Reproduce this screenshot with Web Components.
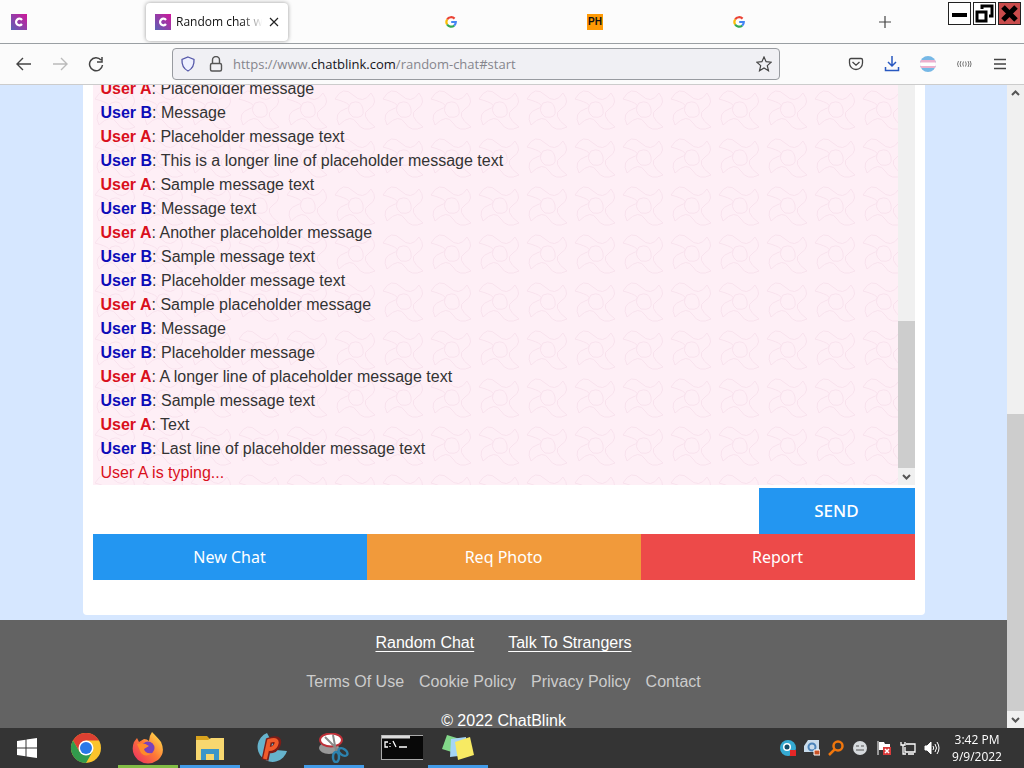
<!DOCTYPE html>
<html lang="en">
<head>
<meta charset="utf-8">
<title>Random chat</title>
<style>
html,body{height:100%;margin:0}
body{overflow:hidden;font-family:"Liberation Sans",Arial,sans-serif}
</style>
</head>
<body>
<desktop-screen></desktop-screen>
<script>
const define = (name, html) => customElements.define(name, class extends HTMLElement {
  constructor() {
    super();
    const t = document.createElement('template');
    t.innerHTML = '<style>*{box-sizing:border-box}button{font:inherit;color:inherit;border:0;padding:0;background:none}svg{display:block}</style>' + html;
    this.attachShadow({mode: 'open'}).append(t.content.cloneNode(true));
  }
});

define('site-icon', `
<style>:host{display:block;width:16px;height:16px}</style>
<svg width="16" height="16" viewBox="0 0 16 16"><defs><linearGradient id="g" x1="0" y1="1" x2="1" y2="0"><stop stop-color="#5a63b5"/><stop offset="1" stop-color="#d0169a"/></linearGradient></defs><rect width="16" height="16" fill="url(#g)"/><path d="M11 6A3.3 3.3 0 1 0 11 10" fill="none" stroke="#fff" stroke-width="2.2"/></svg>`);

define('google-icon', `
<style>:host{display:block;width:16px;height:16px}</style>
<svg width="16" height="16" viewBox="0 0 16 16" fill="none" stroke-width="2.2"><path d="M4.1 5.5A4.8 4.8 0 0 1 11.6 4.6" stroke="#ea4335"/><path d="M4.1 10.5A4.8 4.8 0 0 1 4.1 5.5" stroke="#fbbc05"/><path d="M11.2 11.6A4.8 4.8 0 0 1 4.1 10.5" stroke="#34a853"/><path d="M8.2 8H12.8A4.8 4.8 0 0 1 11.2 11.6" stroke="#4285f4"/></svg>`);

define('browser-tab', `
<style>
:host{display:flex;align-items:center;gap:5px;width:144px;height:38px;padding:0 9px;font:12px/16px "Open Sans","Noto Sans",sans-serif;color:#111}
:host([active]){width:142px;margin-right:2px;border-radius:4px;background:#fff;box-shadow:0 0 4px #999}
</style><slot></slot>`);

define('tab-strip', `
<style>
:host{display:flex;height:44px;background:#fcfcfc;border-bottom:1px solid #9a9fa3;padding:3px 3px 0 2px;align-items:flex-start}
.label{width:90px;overflow:hidden;white-space:nowrap;-webkit-mask-image:linear-gradient(90deg,#000 75%,transparent 98%);mask-image:linear-gradient(90deg,#000 75%,transparent 98%)}
.ph{width:16px;height:16px;background:#ff9a05;color:#111;font:bold 10px/16px "Liberation Sans";text-align:center}
.new{margin-left:12px;width:16px;height:38px}
.wins{display:flex;gap:2px;margin-left:auto}
.wins button{width:23px;height:23px;border:1px solid #222;background:#fff;margin-top:-1px}
.wins .x{background:#c94c4c}
</style>
<browser-tab><site-icon></site-icon></browser-tab>
<browser-tab active><site-icon></site-icon><span class="label">Random chat with</span><button aria-label="Close tab"><svg width="10" height="10" viewBox="0 0 10 10" stroke="#222" stroke-width="1.2"><path d="M1 1L9 9M9 1L1 9"/></svg></button></browser-tab>
<browser-tab></browser-tab>
<browser-tab><google-icon></google-icon></browser-tab>
<browser-tab><span class="ph">PH</span></browser-tab>
<browser-tab><google-icon></google-icon></browser-tab>
<button class="new" aria-label="New tab"><svg width="14" height="14" viewBox="0 0 14 14" stroke="#444" stroke-width="1.2"><path d="M7 1V13M1 7H13"/></svg></button>
<div class="wins">
<button aria-label="Minimize"><svg width="21" height="21" viewBox="0 0 21 21"><path d="M3 12H18" stroke="#000" stroke-width="4"/></svg></button>
<button aria-label="Restore"><svg width="21" height="21" viewBox="0 0 21 21" fill="none" stroke="#000" stroke-width="3"><path d="M3 9H12V18H3ZM8 6V3H18V13H15"/></svg></button>
<button class="x" aria-label="Close"><svg width="21" height="21" viewBox="0 0 21 21" stroke="#000" stroke-width="5"><path d="M4 4L17 17M17 4L4 17"/></svg></button>
</div>`);

define('nav-bar', `
<style>
:host{display:flex;align-items:center;height:41px;background:#fbfbfb;border-bottom:1px solid #ccc;padding:0 16px}
.nav{display:flex;gap:20px;width:156px}
.url{flex:1;min-width:0;display:flex;align-items:center;height:32px;border:1px solid #989ba0;border-radius:4px;background:#f0f0f4;padding:0 7px;font:13px/20px "Open Sans","Noto Sans",sans-serif;color:#85858c}
.url span{margin-left:9px;flex:1}.url b{font-weight:400;color:#15141a}
.url svg+svg{margin-left:12px}
.tools{display:flex;justify-content:space-between;width:160px;margin-left:68px}
</style>
<div class="nav">
<button aria-label="Back"><svg width="16" height="16" viewBox="0 0 16 16" fill="none" stroke="#444" stroke-width="1.4"><path d="M15 8H1M7 2L1 8L7 14"/></svg></button>
<button aria-label="Forward"><svg width="16" height="16" viewBox="0 0 16 16" fill="none" stroke="#bbb" stroke-width="1.4"><path d="M1 8H15M9 2L15 8L9 14"/></svg></button>
<button aria-label="Reload"><svg width="16" height="16" viewBox="0 0 16 16" fill="none" stroke="#444" stroke-width="1.5"><path d="M13 4A6.5 6.5 0 1 0 14.5 9M14 1V6H9"/></svg></button>
</div>
<div class="url">
<svg width="16" height="16" viewBox="0 0 16 16" fill="#eef0ff" stroke="#5558a8" stroke-width="1.3"><path d="M8 1L14 3.4C14.4 9 12 13 8 15C4 13 1.600 9 2 3.400Z"/></svg>
<svg width="16" height="16" viewBox="0 0 16 16" fill="none" stroke="#555" stroke-width="1.4"><rect x="2.500" y="7.500" width="11" height="7.500" rx="1.500"/><path d="M4.500 7V4A3.500 3.500 0 0 1 11.500 4V7"/></svg>
<span>https://www.<b>chatblink.com</b>/random-chat#start</span>
<svg width="16" height="16" viewBox="0 0 16 16" fill="none" stroke="#444" stroke-width="1.2"><path d="M8 1L10.100 5.700L15.200 6.200L11.300 9.600L12.500 14.700L8 12L3.500 14.700L4.700 9.600L.8 6.200L5.900 5.700Z"/></svg>
</div>
<div class="tools">
<button aria-label="Pocket"><svg width="16" height="16" viewBox="0 0 16 16" fill="none" stroke="#444" stroke-width="1.3"><path d="M3 2.500H13Q14.500 2.500 14.500 4V7A6.500 6.500 0 0 1 1.500 7V4Q1.500 2.500 3 2.500ZM4.500 6L8 9.200L11.500 6"/></svg></button>
<button aria-label="Downloads"><svg width="16" height="16" viewBox="0 0 16 16" fill="none" stroke="#2858c0" stroke-width="1.5"><path d="M8 0V10M4 6L8 10L12 6M1.500 11V14.500H14.500V11"/></svg></button>
<button aria-label="Account"><svg width="16" height="16" viewBox="0 0 16 16"><clipPath id="c"><circle cx="8" cy="8" r="8"/></clipPath><g clip-path="url(#c)"><path fill="#76b8e6" d="M0 0H16V16H0Z"/><path fill="#edb0ce" d="M0 4H16V12H0Z"/><path fill="#fff" d="M0 6.500H16V10H0Z"/></g></svg></button>
<button aria-label="Extension"><svg width="16" height="16" viewBox="0 0 16 16" fill="none" stroke="#777"><path d="M2.500 5Q.5 8 2.500 11M5 5Q3 8 5 11M7.500 5.500Q6 8 7.500 10.500M9.500 5.500Q11 8 9.500 10.500M12 5Q14 8 12 11M14.200 5Q16 8 14.200 11"/></svg></button>
<button aria-label="Menu"><svg width="16" height="16" viewBox="0 0 16 16" stroke="#444" stroke-width="1.300"><path d="M2 3.500H14M2 8H14M2 12.500H14"/></svg></button>
</div>`);

define('scroll-bar', `
<style>
:host{display:flex;flex-direction:column;width:17px;background:#f0f0f0}
.arrow{height:17px;padding:5px 4px}
.track{flex:1;min-height:0;display:flex;flex-direction:column;justify-content:flex-end}
.thumb{height:var(--size);margin-bottom:var(--end,0px);background:#cdcdcd}
</style>
<div class="arrow"><svg width="9" height="7" viewBox="0 0 9 7" fill="none" stroke="#555" stroke-width="2"><path d="M1 5L4.500 1.500L8 5"/></svg></div>
<div class="track"><div class="thumb"></div></div>
<div class="arrow"><svg width="9" height="7" viewBox="0 0 9 7" fill="none" stroke="#555" stroke-width="2"><path d="M1 2L4.500 5.500L8 2"/></svg></div>`);

define('chat-line', `
<style>:host{display:block;color:#333;font-size:16px;line-height:24px}b{color:#d9101c}:host([me]) b{color:#0c0cb8}</style>
<b><slot name="who"></slot></b>: <slot></slot>`);

define('chat-log', `
<style>
:host{display:flex;height:400px;overflow:hidden;position:relative;align-items:flex-end;background:#feeff6}
.bg{position:absolute;inset:0;width:100%;height:100%}
.lines{position:relative;flex:1;padding:0 8px}
.typing{color:#d9101c;font-size:16px;line-height:24px}
scroll-bar{position:relative;height:640px;--size:147px}
</style>
<svg class="bg" aria-hidden="true"><defs><pattern id="p" width="48" height="48" patternUnits="userSpaceOnUse"><path d="M2 14Q10 0 20 10T38 8Q46 18 36 24T42 42Q30 48 24 38T6 40Q0 28 12 24T2 14M18 18Q28 14 30 24T20 32Q12 26 18 18" fill="none" stroke="#f8e2ed"/></pattern></defs><rect width="100%" height="100%" fill="url(#p)"/></svg>
<div class="lines"><slot></slot><div class="typing">User A is typing...</div></div>
<scroll-bar></scroll-bar>`);

define('chat-panel', `
<style>
:host{display:block;width:842px;max-width:100%;padding:0 10px 35px;background:#fff;border-radius:0 0 4px 4px}
.send{display:flex;height:46px;margin-top:3px}
textarea{flex:1;min-width:0;border:0;padding:4px 8px;resize:none;outline:0;background:#fff;font:16px/20px "Liberation Sans",Arial,sans-serif}
.send button{width:156px;background:#2396f1;color:#fff;font:500 17px/24px "Noto Sans",sans-serif}
.actions{display:grid;grid-template-columns:repeat(3,1fr);height:46px;color:#fff;font:16px/24px "Noto Sans",sans-serif;text-shadow:0 1px 1px #0005}
.n{background:#2396f1}.q{background:#f19a3b}.r{background:#ed4a49}
</style>
<chat-log><slot></slot></chat-log>
<div class="send"><textarea aria-label="Message" autofocus></textarea><button>SEND</button></div>
<div class="actions"><button class="n">New Chat</button><button class="q">Req Photo</button><button class="r">Report</button></div>`);

define('site-footer', `
<style>
:host{display:block;background:#636363;text-align:center;font-size:16px;line-height:24px;color:#fff;padding-top:11px}
nav{display:flex;justify-content:center;gap:15px;margin-bottom:15px}
nav.main{gap:34px}a{color:#ccc;text-decoration:none}.main a{color:#fff;text-decoration:underline;text-underline-offset:3px}
</style>
<nav class="main"><a href="#random">Random Chat</a><a href="#talk">Talk To Strangers</a></nav>
<nav><a href="#terms">Terms Of Use</a><a href="#cookies">Cookie Policy</a><a href="#privacy">Privacy Policy</a><a href="#contact">Contact</a></nav>
<div>© 2022 ChatBlink</div>`);

define('task-item', `
<style>:host{display:flex;align-items:center;justify-content:center;width:60px;height:40px;border-bottom:3px solid var(--line,transparent);padding-top:2px}</style><slot></slot>`);

define('task-bar', `
<style>
:host{display:flex;align-items:center;height:40px;background:#343434;color:#fff}
.apps{display:flex;gap:2px}.apps :first-child{width:54px}
.tray{display:flex;gap:8px;margin-left:auto}
.clock{width:66px;margin:0 14px 0 4px;text-align:center;font:12px/17px "Open Sans","Noto Sans",sans-serif}
</style>
<div class="apps">
<task-item><svg width="20" height="20" viewBox="0 0 20 20" fill="#fff"><path d="M0 3L8.500 1.700V9.500H0ZM9.500 1.500L20 0V9.500H9.500ZM0 10.500H8.500V18.300L0 17ZM9.500 10.500H20V20L9.500 18.500Z"/></svg></task-item>
<task-item><svg width="30" height="30" viewBox="0 0 30 30"><circle cx="15" cy="15" r="15" fill="#fbc42c"/><path d="M2 7.500A15 15 0 0 1 28 7.500H15L8.500 18.800Z" fill="#dd4032"/><path d="M2 7.500A15 15 0 0 0 15 30L21.500 18.800H8.500Z" fill="#329b4d"/><circle cx="15" cy="15" r="7.500" fill="#fff"/><circle cx="15" cy="15" r="6" fill="#2878e8"/></svg></task-item>
<task-item style="--line:#82bd45"><svg width="32" height="32" viewBox="0 0 32 32"><defs><linearGradient id="f" x1="1" y1="0" x2="0" y2="1"><stop stop-color="#fff04d"/><stop offset=".5" stop-color="#ff7836"/><stop offset="1" stop-color="#e82468"/></linearGradient></defs><path d="M20 0Q27 7 29 10Q34 21 26 28Q16 35 6 28Q-2 20 2 10L5 6L7 10L12 7Q15 7 17 9Q17 4 20 0Z" fill="url(#f)"/><circle cx="16" cy="16" r="6.500" fill="#7941bd"/><path d="M5 12Q12 10 17 14L12 17Q13 22 20 21Q14 26 9 21Z" fill="#ff8a2b"/></svg></task-item>
<task-item style="--line:#429be8"><svg width="28" height="24" viewBox="0 0 28 24"><path d="M0 0H11L14 3H28V24H0Z" fill="#d9a31d"/><path d="M0 4H12L15 2H28V24H0Z" fill="#f7d76f"/><path d="M5 24V13H23V24H18V18H10V24Z" fill="#3b96c8"/></svg></task-item>
<task-item><svg width="30" height="30" viewBox="0 0 30 30"><path d="M10 0A15 15 0 1 0 30 18L19 17Z" fill="#66b3cc"/><path d="M8 27L12 8Q23 4 20 12Q18 17 12 17" fill="none" stroke="#7d1d18" stroke-width="7"/><path d="M8 26L12 8Q22 5 19 12Q17 16 12 16" fill="none" stroke="#f15b2b" stroke-width="4"/></svg></task-item>
<task-item style="--line:#429be8"><svg width="30" height="30" viewBox="0 0 30 30"><ellipse cx="10" cy="15" rx="10" ry="6" fill="#999"/><ellipse cx="12" cy="7" rx="11" ry="6.500" fill="#fff" stroke="#bd3038" stroke-width="2"/><path d="M6 4L20 18M14 2L17 18" stroke="#888" stroke-width="2"/><g fill="none" stroke="#2c82ae" stroke-width="2.500"><ellipse cx="17" cy="24" rx="3" ry="5"/><ellipse cx="24" cy="19" rx="5" ry="3" transform="rotate(35 24 19)"/></g></svg></task-item>
<task-item><svg width="30" height="25" viewBox="0 0 30 25"><rect x=".5" y=".5" width="29" height="24" fill="#080808" stroke="#aaa"/><path d="M1 2H29" stroke="#ddd" stroke-width="3"/><path d="M7 7H4V12H7M9 8V9M9 11V12M12 6L15 12M18 12H26" fill="none" stroke="#fff" stroke-width="1.300"/></svg></task-item>
<task-item style="--line:#429be8"><svg width="32" height="26" viewBox="0 0 32 26"><path d="M5 0L18 4L13 18L0 14Z" fill="#82d889"/><path d="M9 4L24 2L25 20L8 22Z" fill="#a5d5f5"/><path d="M13 7L28 2L32 20L16 25Z" fill="#f7ea63"/></svg></task-item>
</div>
<div class="tray">
<svg width="16" height="16" viewBox="0 0 16 16"><circle cx="8" cy="8" r="8" fill="#35aad2"/><circle cx="7" cy="7" r="4" fill="#fff"/><circle cx="7" cy="7" r="2.500" fill="#134b66"/><path d="M10 10H16V16H10Z" fill="#e52727"/></svg>
<svg width="16" height="16" viewBox="0 0 16 16"><path d="M4 0H15V12H0V6Z" fill="#c9dcec"/><circle cx="8" cy="7" r="3.500" fill="none" stroke="#4b84ba" stroke-width="2"/><path d="M10 10H16V15H10Z" fill="#c95226" stroke="#fff"/></svg>
<svg width="16" height="16" viewBox="0 0 16 16" fill="none" stroke="#ef760d" stroke-width="2.500"><circle cx="10" cy="6" r="4.500"/><path d="M7 9L1 15"/></svg>
<svg width="16" height="16" viewBox="0 0 16 16"><circle cx="8" cy="8" r="7" fill="#d6dadd"/><path d="M4 6H7M9 6H12M4 10H12" stroke="#555"/></svg>
<svg width="16" height="16" viewBox="0 0 16 16"><path d="M2 1V15" stroke="#fff"/><path d="M3 2H8L9 4H14V10H3Z" fill="#fff"/><path d="M7 7H15V15H7Z" fill="#d83a3a"/><path d="M9 9L13 13M13 9L9 13" stroke="#fff" stroke-width="1.500"/></svg>
<svg width="16" height="16" viewBox="0 0 16 16" fill="none" stroke="#fff" stroke-width="1.300"><path d="M6 4H15V12H5V7M8 14H14M1 2V5H5V2M3 5V14H6"/></svg>
<svg width="16" height="16" viewBox="0 0 16 16" fill="none" stroke="#fff"><path d="M1 6H3L7 2V14L3 10H1Z" fill="#fff"/><path d="M9 6Q10.500 8 9 10M11 4Q14 8 11 12M13 2Q17 8 13 14"/></svg>
</div>
<div class="clock">3:42 PM<br>9/9/2022</div>`);

define('desktop-screen', `
<style>
:host{display:flex;flex-direction:column;height:100vh}
.view{flex:1;min-height:0;display:flex;overflow:hidden}
main{flex:1;min-width:0;display:flex;flex-direction:column;background:#d6e7ff;overflow:hidden}
chat-panel{align-self:center;margin-bottom:5px;flex-shrink:0}
site-footer{flex:1 0 auto}
scroll-bar{--size:297px}
</style>
<tab-strip></tab-strip><nav-bar></nav-bar>
<div class="view"><main><chat-panel>
<chat-line><span slot="who">User A</span>Placeholder message</chat-line>
<chat-line me><span slot="who">User B</span>Message</chat-line>
<chat-line><span slot="who">User A</span>Placeholder message text</chat-line>
<chat-line me><span slot="who">User B</span>This is a longer line of placeholder message text</chat-line>
<chat-line><span slot="who">User A</span>Sample message text</chat-line>
<chat-line me><span slot="who">User B</span>Message text</chat-line>
<chat-line><span slot="who">User A</span>Another placeholder message</chat-line>
<chat-line me><span slot="who">User B</span>Sample message text</chat-line>
<chat-line me><span slot="who">User B</span>Placeholder message text</chat-line>
<chat-line><span slot="who">User A</span>Sample placeholder message</chat-line>
<chat-line me><span slot="who">User B</span>Message</chat-line>
<chat-line me><span slot="who">User B</span>Placeholder message</chat-line>
<chat-line><span slot="who">User A</span>A longer line of placeholder message text</chat-line>
<chat-line me><span slot="who">User B</span>Sample message text</chat-line>
<chat-line><span slot="who">User A</span>Text</chat-line>
<chat-line me><span slot="who">User B</span>Last line of placeholder message text</chat-line>
</chat-panel><site-footer></site-footer></main><scroll-bar></scroll-bar></div>
<task-bar></task-bar>`);
</script>
</body>
</html>
